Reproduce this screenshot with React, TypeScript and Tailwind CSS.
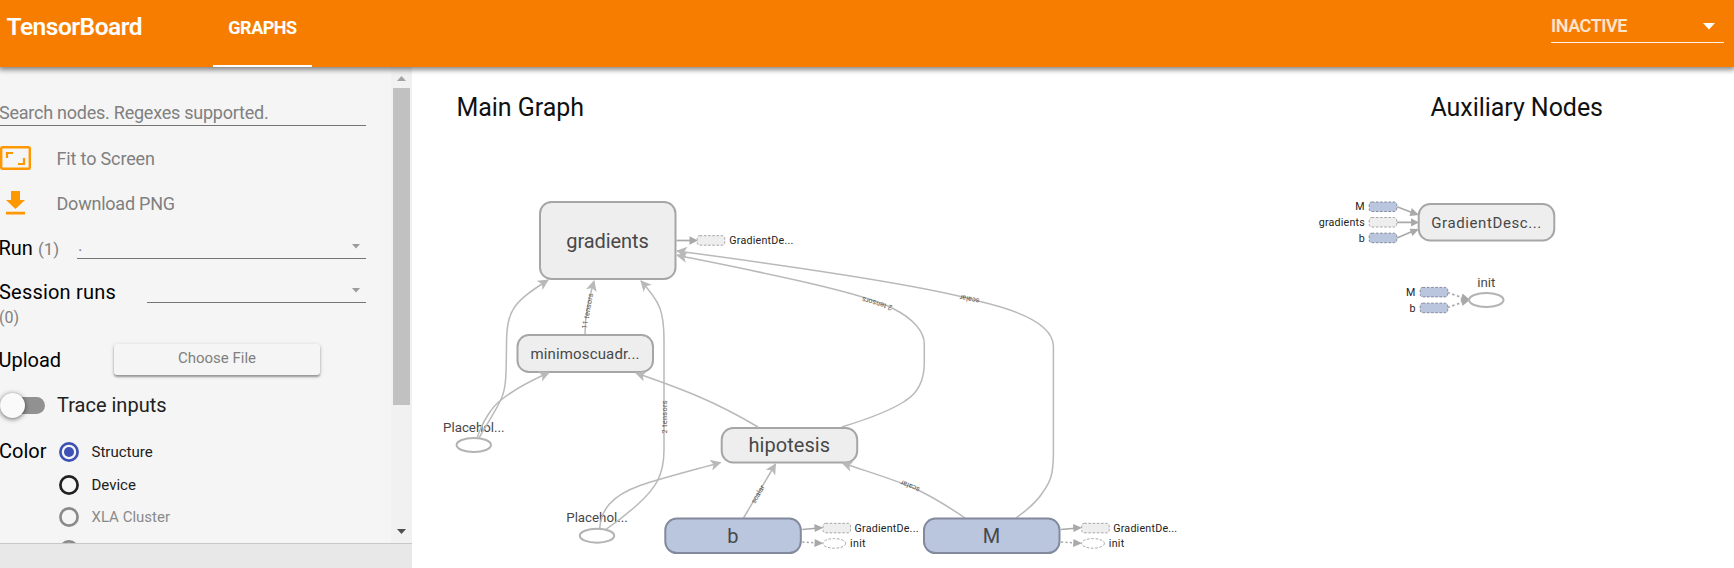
import React from "react";

const ROBOTO = "font-[Roboto,sans-serif]";

type TProps = {
  x: number; y: number; w?: number; size: number; fill?: string; anchor?: "start" | "middle" | "end"; children: string;
};
const T = ({ x, y, w, size, fill = "#484848", anchor = "middle", children }: TProps) => (
  <text x={x} y={y} fontSize={size} fill={fill} textAnchor={anchor} textLength={w}>{children}</text>
);

type BoxProps = { x: number; y: number; w: number; h: number; blue?: boolean };
const Box = ({ x, y, w, h, blue }: BoxProps) => (
  <rect x={x} y={y} width={w} height={h} rx={11.5} fill={blue ? "#bac5de" : "#eee"} stroke={blue ? "#828a9c" : "#a6a6a6"} strokeWidth={2} />
);

const Mini = ({ x, y, blue }: { x: number; y: number; blue?: boolean }) => (
  <rect x={x} y={y} width={27.5} height={9.5} rx={2.5} fill={blue ? "#bac5de" : "#eee"} stroke={blue ? "#828a9c" : "#a6a6a6"} strokeWidth={1} strokeDasharray="2.6 1.6" />
);

const Oval = ({ x, y }: { x: number; y: number }) => (
  <ellipse cx={x} cy={y} rx={17.2} ry={7} fill="#fff" stroke="#b3b3b3" strokeWidth={2} />
);

const edges = [
  "M479 438C485 427 494 414 500.7 400C506 389 506 376 506.3 360L506.5 345C506.5 309 514 302 548 280",
  "M477 438C483 420 493 406 501 400C512 391 530 381 549 372.5",
  "M585 334C585 314 589 299 594 281",
  "M605 530C617 522 627 514 637 505C655 489 664 476 664 450V340C664 311 660 302 641 281",
  "M599.7 528.5C601 510 611 496 640 485.5C662 478 690 471 720.5 462.6",
  "M758 427C716 402 685 390 636 373",
  "M841.7 427C868 419 890 411 905 401C918 393 924.3 380 924.3 363V344C924.3 332 914 319 893 308.5C863 292 750 270 677 255.3",
  "M743.5 518L775.5 464",
  "M965 518C949 507 936 499 920 491C900 481 865 471 842.5 463",
  "M1016 518C1030 508 1038 500 1043 492C1051 481 1053 474 1053.4 455V346C1053 326 1025 312 980 301.5C925 285 760 262 677 251",
];

const labels: [number, number, number, number, string][] = [
  [587.2, 311, -80, 36, "11 tensors"],
  [664, 417, -90, 33, "2 tensors"],
  [877, 304, 197, 31, "2 tensors"],
  [969.5, 299.5, 191, 20, "scalar"],
  [910, 486.5, 202, 20, "scalar"],
  [757.5, 494, -60, 20, "scalar"],
];

const VarNode = ({ x, label }: { x: number; label: string }) => (
  <g>
    <Box x={x} y={518.5} w={135.5} h={34.6} blue />
    <T x={x + 67.6} y={543.2} size={20}>{label}</T>
    <path d={`M${x + 137} 529.5L${x + 151} 528.3`} stroke="#a9a9a9" strokeWidth={1.5} />
    <path d={`M${x + 137} 542L${x + 151} 542.9`} stroke="#a9a9a9" strokeWidth={1.5} strokeDasharray="2.2 2.2" />
    <path d={`M${x + 149} 524L${x + 158} 527.8L${x + 149.5} 532ZM${x + 149.5} 539L${x + 158} 543.3L${x + 149} 547Z`} fill="#a9a9a9" />
    <Mini x={x + 157.7} y={523.3} />
    <ellipse cx={x + 169} cy={543.4} rx={11.4} ry={4.8} fill="#fff" stroke="#a6a6a6" strokeDasharray="2.6 1.6" />
    <T x={x + 189.2} y={532} size={10.7} w={64} anchor="start" fill="#222">GradientDe...</T>
    <T x={x + 184.7} y={547} size={10.7} w={15.6} anchor="start" fill="#222">init</T>
  </g>
);

const Graph = () => (
  <svg width="1322" height="501" viewBox="412 67 1322 501" className={`block ${ROBOTO}`}>
    <defs>
      <marker id="arrow" markerUnits="userSpaceOnUse" markerWidth="12" markerHeight="12" refX="10" refY="5.5" orient="auto">
        <path d="M0 0L11 5.5L0 11L2.8 5.5Z" fill="#b9b9b9" />
      </marker>
    </defs>
    <T x={456.5} y={116} size={25} w={127.5} anchor="start" fill="#111">Main Graph</T>
    <T x={1430.5} y={116} size={25} w={172.5} anchor="start" fill="#111">Auxiliary Nodes</T>

    <Box x={540} y={202} w={135.5} h={77} />
    <Box x={517.5} y={335} w={135.5} h={37} />
    <Box x={721.7} y={428} w={135.5} h={34.5} />
    <Oval x={473.8} y={445} />
    <Oval x={597} y={535.7} />
    <T x={473.8} y={432} size={13.3} w={61.5}>Placehol...</T>
    <T x={597} y={522} size={13.3} w={61.5}>Placehol...</T>

    <g fill="none" stroke="#b9b9b9" strokeWidth={1.5}>
      {edges.map((d) => <path key={d} d={d} markerEnd="url(#arrow)" />)}
    </g>
    {labels.map(([x, y, r, w, s]) => (
      <text key={`${x}`} transform={`translate(${x} ${y}) rotate(${r})`} y={2.8} fontSize={7.3} fill="#555" textAnchor="middle" textLength={w}>{s}</text>
    ))}

    <T x={607.5} y={248} size={20} w={82.5}>gradients</T>
    <T x={585} y={359} size={15} w={109}>minimoscuadr...</T>
    <T x={789.3} y={452} size={20} w={81.5}>hipotesis</T>

    <path d="M676.5 240.5H690" stroke="#a9a9a9" strokeWidth={1.7} />
    <path d="M689.5 236.2L698 240.5L689.5 244.8Z" fill="#a9a9a9" />
    <Mini x={697.2} y={235.7} />
    <T x={729.3} y={244.2} size={10.7} w={64} anchor="start" fill="#222">GradientDe...</T>

    <VarNode x={665.3} label="b" />
    <VarNode x={924} label="M" />

    <Box x={1418.7} y={204} w={135.6} h={36.5} />
    <T x={1486.3} y={228} size={15} w={110}>GradientDesc...</T>
    <Mini x={1369.2} y={202} blue />
    <Mini x={1369.2} y={217.5} />
    <Mini x={1369.2} y={233.2} blue />
    <T x={1364.7} y={210.2} size={10.7} anchor="end" fill="#222">M</T>
    <T x={1364.7} y={226} size={10.7} w={46} anchor="end" fill="#222">gradients</T>
    <T x={1364.7} y={242} size={10.7} anchor="end" fill="#222">b</T>
    <g stroke="#a9a9a9" strokeWidth={1.7}>
      <path d="M1397 206.8L1412 212.5M1397 222.4H1412M1397 238L1412 231.5" />
      <path d="M1447.5 292.5L1462 297.5M1447.5 307.5L1462 302.5" strokeDasharray="2.5 2.5" />
    </g>
    <path d="M1411.8 208L1419 215L1409.5 216ZM1411 218.2L1419 222.4L1411 226.6ZM1409.5 228.7L1419 229L1412.5 236Z" fill="#a9a9a9" />
    <path d="M1462.5 293.5L1470 299.7L1460.5 301.5ZM1460.5 298L1470 299.8L1462.5 306Z" fill="#a9a9a9" />
    <T x={1486.3} y={287} size={13.3} w={18}>init</T>
    <Oval x={1486.3} y={300} />
    <Mini x={1420.2} y={287.4} blue />
    <Mini x={1420.2} y={303.2} blue />
    <T x={1415.4} y={296} size={10.7} anchor="end" fill="#222">M</T>
    <T x={1415.4} y={312} size={10.7} anchor="end" fill="#222">b</T>
  </svg>
);

const Caret = ({ className = "" }: { className?: string }) => (
  <svg width="8" height="5" viewBox="0 0 8 5" className={className}><path d="M0 0H8L4 4.5Z" fill="currentColor" /></svg>
);

const Radio = ({ label, tone, on }: { label?: string; tone: string; on?: boolean }) => (
  <div className={`flex h-[32.5px] shrink-0 items-center text-[15px] ${tone}`}>
    <svg width="20" height="20" viewBox="0 0 20 20" className={on ? "text-[#3f51b5]" : ""}>
      <circle cx="10" cy="10" r="8.6" fill="none" stroke="currentColor" strokeWidth="2.7" />
      {on && <circle cx="10" cy="10" r="5" fill="currentColor" />}
    </svg>
    {label && <span className="ml-[12.5px] pt-px">{label}</span>}
  </div>
);

const Sidebar = () => (
  <aside className="flex w-[412px] flex-col bg-[#e8e8e8]">
    <div className="flex h-[477px] border-b border-[#c8c8c8] bg-[#f5f5f5]">
      <div className="flex min-w-0 flex-1 flex-col overflow-hidden leading-none text-black">
        <div className="flex h-[59px] w-[366px] shrink-0 items-end border-b border-[#757575] pb-[3px] text-[18px] tracking-[-0.24px] text-[#808080]"><span className="-ml-px">Search nodes. Regexes supported.</span></div>
        <div className="mt-[9px] flex h-[45px] shrink-0 items-center text-[18px] tracking-[-0.15px] text-[#808080]">
          <svg width="31" height="24" viewBox="0 0 31 24" fill="none" stroke="#ff9800" className="mr-[25.5px]">
            <rect x="1.2" y="1.2" width="28.6" height="21.6" rx="1.5" strokeWidth="2.4" />
            <path d="M7 12V7H13M24 12V18H18" strokeWidth="2.2" />
          </svg>
          <span className="pt-[2px]">Fit to Screen</span>
        </div>
        <div className="flex h-[45px] shrink-0 items-center text-[18px] tracking-[-0.22px] text-[#808080]">
          <svg width="31" height="24" viewBox="0 0 31 24" fill="#ff9800" className="mr-[25.5px]">
            <path d="M11 0H20V9H25L15.5 18L6 9H11ZM6 20.7H25V23.4H6Z" />
          </svg>
          <span className="pt-[2px]">Download PNG</span>
        </div>
        <div className="mt-px flex h-[33px] w-[366px] shrink-0 items-end text-[20px]">
          <span className="-ml-[1.5px] pb-[1px]">Run</span>
          <span className="ml-[5px] pb-[1px] text-[17px] text-[#808080]">(1)</span>
          <div className="ml-auto flex h-[26px] w-[289px] items-center justify-between border-b border-[#757575] pr-[6px] pl-[1px] text-[17px] text-[#808080]">
            <span>.</span><Caret className="mt-[1px] text-[#9b9b9b]" />
          </div>
        </div>
        <div className="mt-[11px] flex h-[33px] w-[366px] shrink-0 items-end text-[20px]">
          <span className="-ml-px pb-[1px] tracking-[0.2px]">Session runs</span>
          <div className="ml-auto flex h-[26px] w-[219px] items-center justify-end border-b border-[#757575] pr-[6px]">
            <Caret className="mt-[1px] text-[#9b9b9b]" />
          </div>
        </div>
        <div className="mt-[6px] -ml-px flex h-[18px] shrink-0 items-center text-[16px] text-[#808080]">(0)</div>
        <div className="mt-[16px] flex h-[32px] shrink-0 items-center text-[20px]">
          <span className="-ml-[1.5px] w-[115.5px] pt-[2px]">Upload</span>
          <button className="h-[31px] w-[206px] rounded-[3px] bg-[#f5f5f5] pb-[2px] text-[15px] text-[#808080] shadow-[0_2px_2px_0_rgba(0,0,0,0.3),0_1px_4px_0_rgba(0,0,0,0.18)]">Choose File</button>
        </div>
        <div className="mt-[13px] flex h-[34px] shrink-0 items-center text-[20px] text-[#212121]">
          <div className="mr-[12px] flex h-[17px] w-[45px] items-center rounded-full bg-[#919191]">
            <div className="size-[25px] shrink-0 rounded-full bg-[#fafafa] shadow-[0_1px_5px_rgba(0,0,0,0.6)]" />
          </div>
          <span>Trace inputs</span>
        </div>
        <div className="mt-[14px] flex shrink-0">
          <span className="-ml-px w-[60px] pt-[5px] text-[20px]">Color</span>
          <div className="flex flex-col">
            <Radio label="Structure" tone="text-[#212121]" on />
            <Radio label="Device" tone="text-[#212121]" />
            <Radio label="XLA Cluster" tone="text-[#8a8a8a]" />
            <Radio tone="text-[#8a8a8a]" />
          </div>
        </div>
      </div>
      <div className="flex w-[21px] flex-col items-center bg-[#f1f1f1]">
        <svg width="9" height="5" viewBox="0 0 9 5" className="mt-[9px] shrink-0"><path d="M0 5H9L4.5 0Z" fill="#a3a3a3" /></svg>
        <div className="mt-[7px] h-[317px] w-[17px] bg-[#c1c1c1]" />
        <svg width="9" height="5" viewBox="0 0 9 5" className="mt-auto mb-[9px] shrink-0"><path d="M0 0H9L4.5 5Z" fill="#505050" /></svg>
      </div>
    </div>
  </aside>
);

export default function App() {
  return (
    <div className={`flex h-[568px] w-[1734px] flex-col overflow-hidden bg-white ${ROBOTO}`}>
      <header className="relative z-10 flex h-[67px] shrink-0 bg-[#f77d00] leading-none text-white shadow-[0_2px_5px_1px_rgba(0,0,0,0.45)]">
        <h1 className="w-[213px] pt-[15px] pl-[6.5px] text-[24.5px] font-semibold tracking-[-0.5px]">TensorBoard</h1>
        <div className="flex w-[99px] justify-center border-b-2 border-white pt-[19px] text-[18px] font-bold tracking-[-0.5px]">GRAPHS</div>
        <div className="mt-[14px] mr-[10px] ml-auto flex h-[29px] w-[173px] justify-between border-b border-white/90 pt-[3px] text-[18px] font-semibold tracking-[-0.45px]">
          <span className="text-white/80">INACTIVE</span>
          <svg width="12" height="7" viewBox="0 0 12 7" className="mt-[6px] mr-[9px]"><path d="M0 0H12L6 6.5Z" fill="#fff" /></svg>
        </div>
      </header>
      <div className="flex min-h-0 flex-1">
        <Sidebar />
        <main className="flex-1"><Graph /></main>
      </div>
    </div>
  );
}
